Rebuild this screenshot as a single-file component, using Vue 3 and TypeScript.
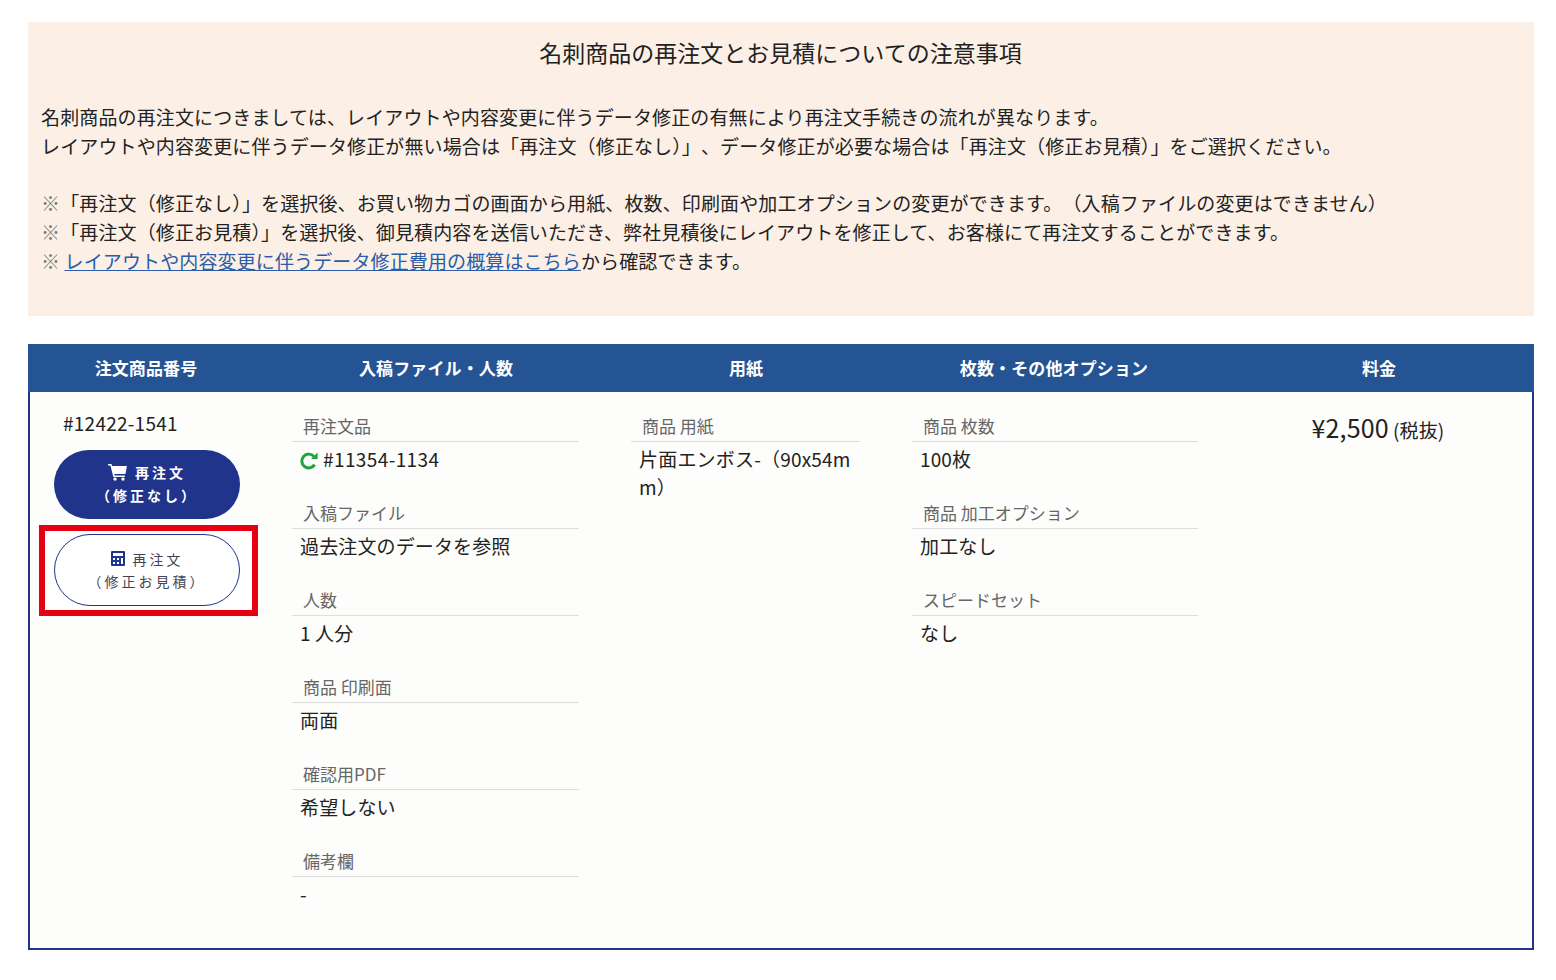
<script setup lang="ts">
interface Field { label: string; value: string; refresh?: boolean }
const columnTwo: Field[] = [
  { label: '再注文品', value: '#11354-1134', refresh: true },
  { label: '入稿ファイル', value: '過去注文のデータを参照' },
  { label: '人数', value: '1 人分' },
  { label: '商品 印刷面', value: '両面' },
  { label: '確認用PDF', value: '希望しない' },
  { label: '備考欄', value: '-' },
]
const columnThree: Field[] = [{ label: '商品 用紙', value: '片面エンボス-（90x54mm）' }]
const columnFour: Field[] = [
  { label: '商品 枚数', value: '100枚' },
  { label: '商品 加工オプション', value: '加工なし' },
  { label: 'スピードセット', value: 'なし' },
]
const headers = ['注文商品番号', '入稿ファイル・人数', '用紙', '枚数・その他オプション', '料金']
</script>

<template>
  <main class="page">
    <section class="notice">
      <h2 class="notice-title">名刺商品の再注文とお見積についての注意事項</h2>
      <p class="para">名刺商品の再注文につきましては、レイアウトや内容変更に伴うデータ修正の有無により再注文手続きの流れが異なります。<br>レイアウトや内容変更に伴うデータ修正が無い場合は「再注文（修正なし）」<span class="gap"></span>、データ修正が必要な場合は「再注文（修正お見積）」をご選択ください。</p>
      <p class="para notes">
        <span class="mark">※</span>「再注文（修正なし）」を選択後、お買い物カゴの画面から用紙、枚数、印刷面や加工オプションの変更ができます。<span class="gap"></span>（入稿ファイルの変更はできません）<br>
        <span class="mark">※</span>「再注文（修正お見積）」を選択後、御見積内容を送信いただき、弊社見積後にレイアウトを修正して、お客様にて再注文することができます。<br>
        <span class="mark">※</span> <a class="link" href="#">レイアウトや内容変更に伴うデータ修正費用の概算はこちら</a>から確認できます。
      </p>
    </section>

    <section class="order">
      <header class="order-head">
        <div v-for="h in headers" :key="h" class="head-cell">{{ h }}</div>
      </header>
      <div class="order-body">
        <div class="col col-one">
          <div class="order-no">#12422-1541</div>
          <button class="btn btn-solid" type="button">
            <span class="btn-line">
              <svg class="btn-icon" viewBox="0 0 20 18" aria-hidden="true">
                <path fill="currentColor" d="M0 0h3.6l.7 2.2H20l-1.6 8.3H6.6l.4 1.6h10.8v1.6H5.6L2.5 1.6H0z" />
                <circle cx="7.4" cy="16" r="1.8" fill="currentColor" />
                <circle cx="15.8" cy="16" r="1.8" fill="currentColor" />
              </svg>
              再注文
            </span>
            <span class="btn-line">（修正なし）</span>
          </button>
          <div class="highlight">
            <button class="btn btn-outline" type="button">
              <span class="btn-line">
                <svg class="btn-icon calc" viewBox="0 0 14 15" aria-hidden="true">
                  <path fill="currentColor" fill-rule="evenodd" d="M1 0h12a1 1 0 0 1 1 1v13a1 1 0 0 1-1 1H1a1 1 0 0 1-1-1V1a1 1 0 0 1 1-1zm1 2v3h10V2zm0 5v2h2V7zm4 0v2h2V7zm4 0v6h2V7zm-8 4v2h2v-2zm4 0v2h2v-2z" />
                </svg>
                再注文
              </span>
              <span class="btn-line">（修正お見積）</span>
            </button>
          </div>
        </div>

        <div class="col col-two">
          <div v-for="f in columnTwo" :key="f.label" class="field">
            <div class="field-label">{{ f.label }}</div>
            <div class="field-value" :class="{ latin: f.refresh }">
              <svg v-if="f.refresh" class="refresh" viewBox="0 0 18 18" aria-hidden="true">
                <path fill="none" stroke="#22a33a" stroke-width="3" d="M14.6 12.6A6.9 6.9 0 1 1 14 4.6" />
                <path fill="#22a33a" d="M11 6.9 17.6 7V.6z" />
              </svg>{{ f.value }}
            </div>
          </div>
        </div>

        <div class="col col-three">
          <div v-for="f in columnThree" :key="f.label" class="field">
            <div class="field-label">{{ f.label }}</div>
            <div class="field-value wrap">{{ f.value }}</div>
          </div>
        </div>

        <div class="col col-four">
          <div v-for="f in columnFour" :key="f.label" class="field">
            <div class="field-label">{{ f.label }}</div>
            <div class="field-value">{{ f.value }}</div>
          </div>
        </div>

        <div class="col col-five">
          <span class="price">¥2,500</span> <span class="tax">(税抜)</span>
        </div>
      </div>
    </section>
  </main>
</template>

<style scoped>
.page {
  box-sizing: border-box;
  width: 1556px;
  height: 980px;
  padding: 22px 22px 0 28px;
  background: #fff;
  color: #222;
  font-family: "Noto Sans CJK JP", "Noto Sans", sans-serif;
  font-size: 19px;
  letter-spacing: 0.125px;
  overflow: hidden;
}
.notice {
  box-sizing: border-box;
  height: 294px;
  padding: 14px 14px 0 13px;
  background: #fcf0e6;
}
.notice-title {
  margin: 0 0 35px;
  font-size: 23px;
  font-weight: 400;
  letter-spacing: 0;
  line-height: 32px;
  text-align: center;
}
.para {
  margin: 0;
  line-height: 28.7px;
  white-space: nowrap;
}
.notes {
  margin-top: 29px;
}
.gap {
  margin-left: 0.5em;
}
.mark {
  color: #777;
}
.link {
  color: #2a5ca8;
  text-decoration: underline;
}
.order {
  box-sizing: border-box;
  height: 606px;
  margin-top: 28px;
  border: 2px solid #1f348a;
  border-top: 0;
  background: #fdfdfb;
}
.order-head {
  display: grid;
  grid-template-columns: 232px 348px 272px 344px 306px;
  height: 48px;
  margin: 0 -2px;
  padding: 0 2px;
  background: #245494;
}
.head-cell {
  color: #fff;
  font-size: 17px;
  font-weight: 700;
  line-height: 47px;
  text-align: center;
}
.order-body {
  display: grid;
  grid-template-columns: 232px 348px 272px 344px 304px;
}
.col {
  padding-top: 23px;
}
.col-one {
  padding-top: 17px;
  padding-left: 24px;
}
.col-two {
  padding: 23px 31px 0 30px;
}
.col-three {
  padding: 23px 22px 0 21px;
}
.col-four {
  padding: 23px 28px 0 30px;
}
.col-five {
  padding-top: 16px;
  text-align: center;
  line-height: 38px;
}
.order-no {
  padding-left: 9px;
  letter-spacing: 0.25px;
  line-height: 28px;
}
.btn {
  display: flex;
  flex-direction: column;
  align-items: center;
  justify-content: center;
  width: 186px;
  font-family: inherit;
  font-size: 14px;
  letter-spacing: 3px;
  line-height: 23px;
  cursor: pointer;
}
.btn-solid {
  height: 69px;
  margin-top: 13px;
  padding: 0 0 2px;
  border: 0;
  border-radius: 35px;
  background: #1f348a;
  color: #fff;
  font-weight: 700;
}
.highlight {
  box-sizing: border-box;
  width: 219px;
  height: 91px;
  margin: 6px 0 0 -15px;
  padding: 3px 0 0 9px;
  border: 6px solid #e60012;
  background: #fff;
}
.btn-outline {
  height: 72px;
  padding: 0 0 1px;
  border: 1.5px solid #1f348a;
  border-radius: 36px;
  background: #fff;
  color: #445;
  line-height: 22px;
}
.btn-line {
  display: flex;
  align-items: center;
  white-space: nowrap;
}
.btn-icon {
  width: 19px;
  height: 17px;
  margin-right: 8px;
}
.calc {
  width: 14px;
  height: 15px;
  color: #1f348a;
}
.field {
  height: 87px;
}
.field-label {
  box-sizing: border-box;
  height: 27px;
  padding-left: 11px;
  border-bottom: 1px solid #ddd;
  color: #666;
  font-size: 17px;
  letter-spacing: 0;
  line-height: 22px;
}
.field-value {
  padding: 3px 8px 0;
  line-height: 28px;
}
.latin {
  letter-spacing: 0.4px;
}
.wrap {
  letter-spacing: 0.2px;
  word-break: break-all;
}
.refresh {
  width: 18px;
  height: 18px;
  margin-right: 5px;
  vertical-align: -3px;
}
.price {
  font-size: 25px;
}
.tax {
  font-size: 19px;
}
</style>

<style>
html, body {
  margin: 0;
  background: #fff;
}
</style>
